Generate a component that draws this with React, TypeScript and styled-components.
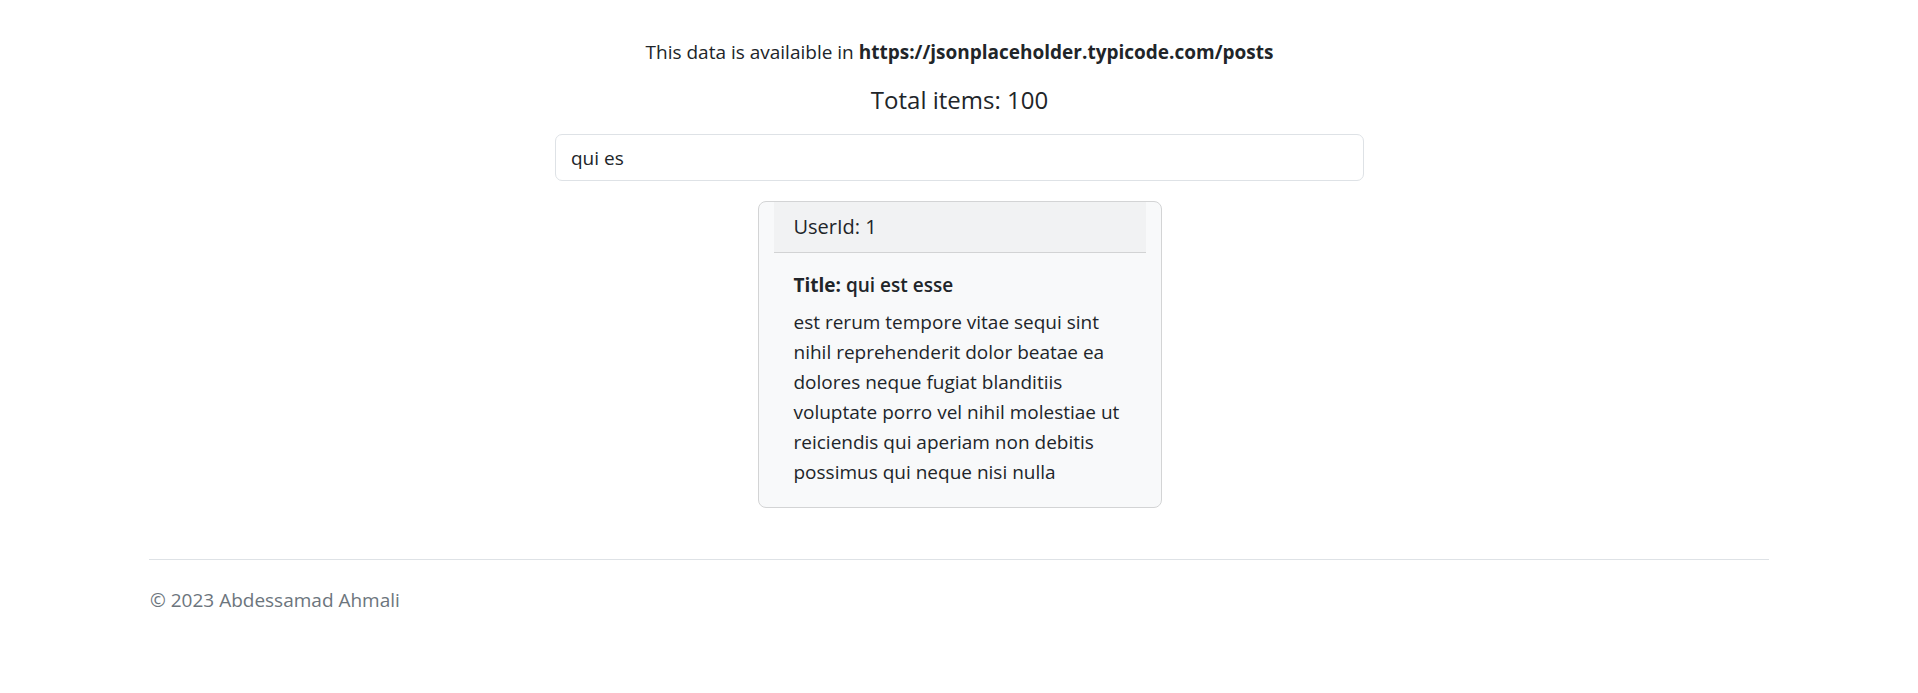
import styled, { createGlobalStyle } from "styled-components";

const GlobalStyle = createGlobalStyle`
  body {
    margin: 0;
    background-color: #ffffff;
    color: #212529;
    font-family: "Open Sans", "Noto Sans", sans-serif;
    font-size: 20px;
    line-height: 1.5;
  }
  * {
    box-sizing: border-box;
  }
`;

const post = {
  userId: 1,
  title: "qui est esse",
  body: "est rerum tempore vitae sequi sint nihil reprehenderit dolor beatae ea dolores neque fugiat blanditiis voluptate porro vel nihil molestiae ut reiciendis qui aperiam non debitis possimus qui neque nisi nulla",
};

const PostCard = () => (
  <StyledCard>
    <StyledCardHeader>UserId: {post.userId}</StyledCardHeader>
    <StyledCardBody>
      <StyledCardTitle>
        <b>Title:</b> {post.title}
      </StyledCardTitle>
      <StyledCardText>{post.body}</StyledCardText>
    </StyledCardBody>
  </StyledCard>
);

const App = () => {
  return (
    <>
      <GlobalStyle />
      <StyledMain>
        <StyledSource>
          This data is availaible in{" "}
          <b>https://jsonplaceholder.typicode.com/posts</b>
        </StyledSource>
        <StyledTotal>Total items: 100</StyledTotal>
        <StyledSearch type="text" defaultValue="qui es" />
        <PostCard />
      </StyledMain>
      <StyledFooter>© 2023 Abdessamad Ahmali</StyledFooter>
    </>
  );
};

const StyledMain = styled.main`
  display: flex;
  flex-direction: column;
  align-items: center;
  padding-top: 40px;
  padding-left: 1px;
`;

const StyledSource = styled.h6`
  margin: 0 0 21px;
  font-size: 19px;
  font-weight: 500;
  line-height: 24px;
  text-align: center;
  b {
    font-weight: 700;
  }
`;

const StyledTotal = styled.h5`
  margin: 0 0 19px;
  font-size: 24px;
  font-weight: 500;
  line-height: 30px;
  text-align: center;
`;

const StyledSearch = styled.input`
  width: 809px;
  height: 47px;
  padding: 0 15px;
  border: 1px solid #dee2e6;
  border-radius: 7px;
  background-color: #ffffff;
  color: #212529;
  font-family: inherit;
  font-size: 19px;
  outline: none;
`;

const StyledCard = styled.div`
  width: 404px;
  margin-top: 20px;
  padding: 0 15px;
  border: 1px solid #d3d4d5;
  border-radius: 8px;
  background-color: #f8f9fa;
`;

const StyledCardHeader = styled.div`
  padding: 10px 20px;
  border-bottom: 1px solid #d2d3d4;
  background-color: #f1f2f3;
  line-height: 30px;
`;

const StyledCardBody = styled.div`
  padding: 20px;
`;

const StyledCardTitle = styled.h5`
  margin: 0 0 10px;
  font-size: 19px;
  font-weight: 600;
  line-height: 24px;
  b {
    font-weight: 700;
  }
`;

const StyledCardText = styled.p`
  margin: 0;
  font-size: 19px;
  line-height: 30px;
`;

const StyledFooter = styled.footer`
  width: 1620px;
  margin: 51px auto 0;
  padding: 25px 0 40px 1px;
  border-top: 1px solid #dee2e6;
  color: #6c757d;
  font-size: 19px;
  line-height: 30px;
`;

export default App;
